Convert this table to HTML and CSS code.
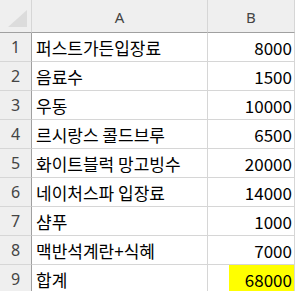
FILE: index.html
```html
<!DOCTYPE html>
<html>
<head>
<meta charset="utf-8">
<link rel="stylesheet" href="styles.css">
</head>
<body>
<div class="sheet">
  <div class="corner"><span class="tri"></span></div>
  <div class="colhead">A</div>
  <div class="colhead">B</div>

  <div class="rowhead">1</div><div class="cell">퍼스트가든입장료</div><div class="cell num">8000</div>
  <div class="rowhead">2</div><div class="cell">음료수</div><div class="cell num">1500</div>
  <div class="rowhead">3</div><div class="cell">우동</div><div class="cell num">10000</div>
  <div class="rowhead">4</div><div class="cell">르시랑스 콜드브루</div><div class="cell num">6500</div>
  <div class="rowhead">5</div><div class="cell">화이트블럭 망고빙수</div><div class="cell num">20000</div>
  <div class="rowhead">6</div><div class="cell">네이처스파 입장료</div><div class="cell num">14000</div>
  <div class="rowhead">7</div><div class="cell">샴푸</div><div class="cell num">1000</div>
  <div class="rowhead">8</div><div class="cell">맥반석계란+식혜</div><div class="cell num">7000</div>
  <div class="rowhead">9</div><div class="cell">합계</div><div class="cell num"><span class="hl">68000</span></div>
</div>
</body>
</html>
```
FILE: styles.css
```css
html, body {
  margin: 0;
  padding: 0;
  background: #ffffff;
}
.sheet {
  display: grid;
  grid-template-columns: 32px 176px 87px;
  grid-template-rows: 33px repeat(9, 29px);
  font-family: "Noto Sans CJK KR", "Noto Sans", sans-serif;
  font-size: 17px;
  color: #000;
}
.sheet > div {
  box-sizing: border-box;
  border-right: 1px solid #d6d6d6;
  border-bottom: 1px solid #d6d6d6;
}
.corner {
  background: #efefef;
  position: relative;
  border-bottom-color: #a0a0a0 !important;
}
.tri {
  position: absolute;
  left: 8px;
  top: 10px;
  width: 0;
  height: 0;
  border-left: 19px solid transparent;
  border-bottom: 17px solid #dcdcdc;
}
.colhead {
  background: #efefef;
  border-bottom-color: #a0a0a0 !important;
  color: #444;
  font-family: "Noto Sans", sans-serif;
  font-size: 15px;
  display: flex;
  align-items: center;
  justify-content: center;
  padding-top: 1px;
}
.rowhead {
  background: #efefef;
  border-right-color: #a0a0a0 !important;
  color: #444;
  font-family: "Noto Sans", sans-serif;
  font-size: 16px;
  display: flex;
  align-items: center;
  justify-content: center;
}
.cell {
  display: flex;
  align-items: center;
  padding: 0 3px 0 4px;
  white-space: nowrap;
  overflow: hidden;
  line-height: 1;
}
.num {
  justify-content: flex-end;
  padding-right: 2px;
}
.sheet > .num:last-child {
  padding-right: 0;
  align-items: stretch;
}
.hl {
  background: #ffff00;
  display: flex;
  align-items: center;
  padding: 0 2px 0 4px;
  width: 65px;
  box-sizing: border-box;
  justify-content: flex-end;
}
```
